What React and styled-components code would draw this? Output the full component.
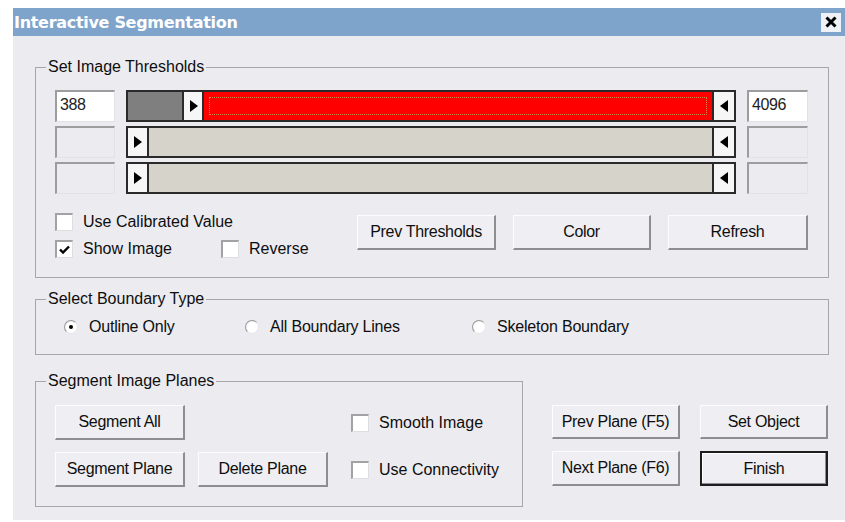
import React from "react";
import styled, { createGlobalStyle, css } from "styled-components";

const GlobalStyle = createGlobalStyle`
  html, body { margin: 0; padding: 0; background: #ffffff; }
  body { font-family: "Liberation Sans", Arial, sans-serif; }
  * { box-sizing: border-box; }
`;

const Window = styled.div`
  margin: 8px 0 0 13px;
  width: 832px;
  height: 512px;
  background: #ecebf0;
  display: flex;
  flex-direction: column;
`;

const TitleBar = styled.div`
  height: 28px;
  background: #7fa4cc;
  display: flex;
  align-items: center;
  justify-content: space-between;
  padding: 0 4px 0 1px;
`;

const Title = styled.span`
  font-family: "DejaVu Sans", Verdana, sans-serif;
  font-weight: bold;
  font-size: 16px;
  letter-spacing: -0.3px;
  color: #ffffff;
`;

const CloseBox = styled.button`
  width: 20px;
  height: 19px;
  padding: 0;
  border: none;
  background: #eef1f5;
  display: grid;
  place-items: center;
`;

const Body = styled.div`
  flex: 1;
  display: flex;
  flex-direction: column;
  padding: 22px 16px 0 22px;
`;

const Group = styled.fieldset`
  margin: ${(p) => p.$mt || 0}px 0 0 0;
  padding: 0;
  min-width: 0;
  width: ${(p) => (p.$w ? `${p.$w}px` : "auto")};
  border: 1px solid #a6a6ab;
`;

const Legend = styled.legend`
  margin-left: 10px;
  padding: 0 2px;
  font-size: 16px;
  line-height: 18px;
  color: #0e0e0e;
`;

const GroupContent = styled.div`
  padding: ${(p) => p.$pad};
`;

/* threshold sliders */
const SliderGrid = styled.div`
  display: grid;
  grid-template-columns: 60px 1fr 61px;
  column-gap: 11px;
  row-gap: 4px;
`;

const ValueBox = styled.div`
  height: 32px;
  border-style: solid;
  border-width: 2px 1px 1px 2px;
  border-color: #9d9d9f #e2e2e6 #e2e2e6 #9d9d9f;
  background: ${(p) => (p.$active ? "#ffffff" : "#ecebf0")};
  font-size: 16px;
  line-height: 18px;
  padding: 4px 3px;
  color: #222;
  letter-spacing: -0.4px;
`;

const Track = styled.div`
  height: 32px;
  border: 2px solid #2a2a2a;
  display: flex;
  background: #d6d3cb;
`;

const LowPart = styled.div`
  width: ${(p) => p.$w}px;
  background: #7f7f7f;
`;

const Thumb = styled.div`
  width: ${(p) => p.$w}px;
  background: #f6f6f6;
  display: grid;
  place-items: center;
  ${(p) => p.$edgeLeft && css`border-left: 2px solid #2a2a2a;`}
  ${(p) => p.$edgeRight && css`border-right: 2px solid #2a2a2a;`}
`;

const Fill = styled.div`
  flex: 1;
  background: ${(p) => (p.$on ? "#ff0000" : "#d6d3cb")};
  ${(p) =>
    p.$on &&
    css`
      outline: 1px dotted #c98a4a;
      outline-offset: -6px;
    `}
`;

const Arrow = ({ dir }) => (
  <svg width="9" height="12" viewBox="0 0 9 12">
    {dir === "right" ? (
      <polygon points="1,0 9,6 1,12" fill="#000" />
    ) : (
      <polygon points="8,0 0,6 8,12" fill="#000" />
    )}
  </svg>
);

/* options area */
const OptionsRow = styled.div`
  display: flex;
  align-items: flex-start;
  margin-top: 19px;
`;

const CheckGrid = styled.div`
  width: 304px;
  display: grid;
  grid-template-columns: 166px auto;
  row-gap: 9px;
`;

const CheckItem = styled.label`
  display: flex;
  align-items: center;
  gap: 10px;
  font-size: 16px;
  line-height: 18px;
  color: #0e0e0e;
  white-space: nowrap;
  margin-left: ${(p) => p.$ml || 0}px;
  grid-column: ${(p) => p.$span || "auto"};
`;

const Box = styled.span`
  width: 18px;
  height: 18px;
  flex: none;
  background: #ffffff;
  border-style: solid;
  border-width: 2px 1px 1px 2px;
  border-color: #a2a2a4 #dedee2 #dedee2 #a2a2a4;
  display: grid;
  place-items: center;
`;

const Check = ({ label, checked, ml, span }) => (
  <CheckItem $ml={ml} $span={span}>
    <Box>
      {checked && (
        <svg width="11" height="10" viewBox="0 0 11 10">
          <polyline points="1,4.5 4,7.5 10,1.5" fill="none" stroke="#000" strokeWidth="2.4" />
        </svg>
      )}
    </Box>
    {label}
  </CheckItem>
);

const ButtonRow = styled.div`
  display: flex;
  gap: 17px;
  margin-top: 2px;
`;

const Btn = styled.button`
  width: ${(p) => p.$w}px;
  height: ${(p) => p.$h || 34}px;
  padding: 0;
  background: #efeef2;
  border-style: solid;
  border-width: 1px 2px 2px 1px;
  border-color: #fdfdfd #8e8e92 #8e8e92 #fdfdfd;
  font-family: "Liberation Sans", Arial, sans-serif;
  font-size: 16px;
  color: #0e0e0e;
  letter-spacing: -0.3px;
  ${(p) =>
    p.$default &&
    css`
      border: 2px solid #1e1e1e;
      box-shadow: inset -1px -1px 0 #8e8e92, inset 1px 1px 0 #ffffff;
    `}
`;

/* boundary radios */
const RadioRow = styled.div`
  display: grid;
  grid-template-columns: 181px 227px auto;
`;

const RadioItem = styled.label`
  display: flex;
  align-items: center;
  gap: 11px;
  font-size: 16px;
  line-height: 18px;
  color: #0e0e0e;
  letter-spacing: -0.2px;
`;

const Dot = styled.span`
  width: 14px;
  height: 14px;
  border-radius: 50%;
  flex: none;
  background: radial-gradient(circle at 60% 60%, #ffffff 55%, #e2e2e6 100%);
  border: 1px solid;
  border-color: #9a9a9e #e6e6ea #e6e6ea #9a9a9e;
  display: grid;
  place-items: center;
  &::after {
    content: "";
    width: 4px;
    height: 4px;
    border-radius: 50%;
    background: ${(p) => (p.$on ? "#000" : "transparent")};
  }
`;

const Radio = ({ label, on }) => (
  <RadioItem>
    <Dot $on={on} />
    {label}
  </RadioItem>
);

/* bottom area */
const BottomRow = styled.div`
  display: flex;
  align-items: flex-end;
  margin-top: 17px;
`;

const PlaneGrid = styled.div`
  display: grid;
  grid-template-columns: 130px 130px 1fr;
  column-gap: 13px;
  row-gap: 12px;
  align-items: center;
`;

const NavGrid = styled.div`
  display: grid;
  grid-template-columns: 128px 128px;
  column-gap: 20px;
  row-gap: 12px;
  margin-left: 29px;
  padding-bottom: 21px;
`;

export default function App() {
  return (
    <>
      <GlobalStyle />
      <Window>
        <TitleBar>
          <Title>Interactive Segmentation</Title>
          <CloseBox aria-label="Close">
            <svg width="12" height="12" viewBox="0 0 12 12">
              <path d="M1.5 1.5 L10.5 10.5 M10.5 1.5 L1.5 10.5" stroke="#000" strokeWidth="3" />
            </svg>
          </CloseBox>
        </TitleBar>
        <Body>
          <Group>
            <Legend>Set Image Thresholds</Legend>
            <GroupContent $pad="14px 20px 19px 19px">
              <SliderGrid>
                <ValueBox $active>388</ValueBox>
                <Track>
                  <LowPart $w={54} />
                  <Thumb $w={22} $edgeLeft $edgeRight>
                    <Arrow dir="right" />
                  </Thumb>
                  <Fill $on />
                  <Thumb $w={22} $edgeLeft>
                    <Arrow dir="left" />
                  </Thumb>
                </Track>
                <ValueBox $active>4096</ValueBox>

                <ValueBox />
                <Track>
                  <Thumb $w={21} $edgeRight>
                    <Arrow dir="right" />
                  </Thumb>
                  <Fill />
                  <Thumb $w={22} $edgeLeft>
                    <Arrow dir="left" />
                  </Thumb>
                </Track>
                <ValueBox />

                <ValueBox />
                <Track>
                  <Thumb $w={21} $edgeRight>
                    <Arrow dir="right" />
                  </Thumb>
                  <Fill />
                  <Thumb $w={22} $edgeLeft>
                    <Arrow dir="left" />
                  </Thumb>
                </Track>
                <ValueBox />
              </SliderGrid>

              <OptionsRow>
                <CheckGrid>
                  <Check label="Use Calibrated Value" span="1 / 3" />
                  <Check label="Show Image" checked />
                  <Check label="Reverse" />
                </CheckGrid>
                <ButtonRow>
                  <Btn $w={139} $h={35}>Prev Thresholds</Btn>
                  <Btn $w={138} $h={35}>Color</Btn>
                  <Btn $w={140} $h={35}>Refresh</Btn>
                </ButtonRow>
              </OptionsRow>
            </GroupContent>
          </Group>

          <Group $mt={12}>
            <Legend>Select Boundary Type</Legend>
            <GroupContent $pad="10px 20px 18px 28px">
              <RadioRow>
                <Radio label="Outline Only" on />
                <Radio label="All Boundary Lines" />
                <Radio label="Skeleton Boundary" />
              </RadioRow>
            </GroupContent>
          </Group>

          <BottomRow>
            <Group $w={488}>
              <Legend>Segment Image Planes</Legend>
              <GroupContent $pad="15px 19px 19px 19px">
                <PlaneGrid>
                  <Btn $w={130} $h={35}>Segment All</Btn>
                  <span />
                  <Check label="Smooth Image" ml={10} />
                  <Btn $w={130} $h={35}>Segment Plane</Btn>
                  <Btn $w={130} $h={35}>Delete Plane</Btn>
                  <Check label="Use Connectivity" ml={10} />
                </PlaneGrid>
              </GroupContent>
            </Group>
            <NavGrid>
              <Btn $w={128}>Prev Plane (F5)</Btn>
              <Btn $w={128}>Set Object</Btn>
              <Btn $w={128} $h={35}>Next Plane (F6)</Btn>
              <Btn $w={128} $h={35} $default>Finish</Btn>
            </NavGrid>
          </BottomRow>
        </Body>
      </Window>
    </>
  );
}
